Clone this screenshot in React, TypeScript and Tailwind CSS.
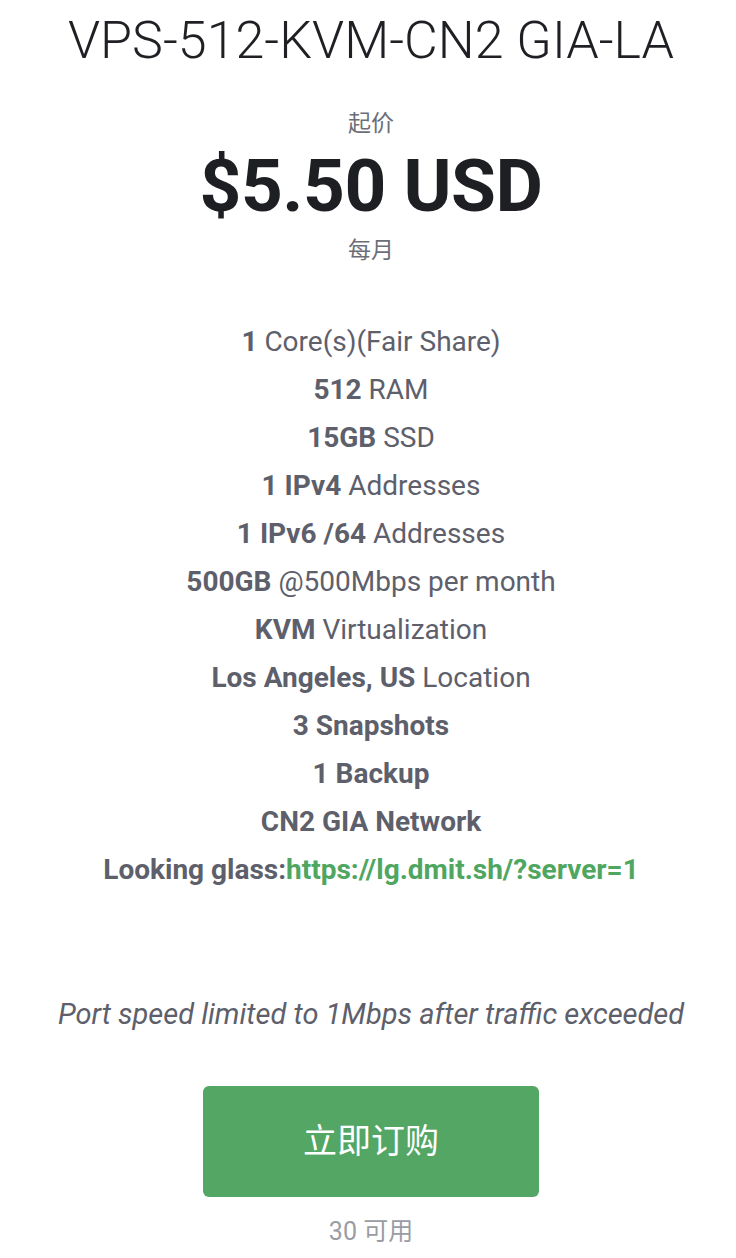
import React from "react";

const features: { b: string; t: string }[] = [
  { b: "1", t: " Core(s)(Fair Share)" },
  { b: "512", t: " RAM" },
  { b: "15GB", t: " SSD" },
  { b: "1 IPv4", t: " Addresses" },
  { b: "1 IPv6 /64", t: " Addresses" },
  { b: "500GB", t: " @500Mbps per month" },
  { b: "KVM", t: " Virtualization" },
  { b: "Los Angeles, US", t: " Location" },
  { b: "3 Snapshots", t: "" },
  { b: "1 Backup", t: "" },
  { b: "CN2 GIA Network", t: "" },
];

export default function App() {
  return (
    <div
      className="w-full bg-white flex flex-col items-center text-center pl-[6px]"
      style={{ fontFamily: 'Roboto, "Noto Sans CJK SC", sans-serif' }}
    >
      <h1 className="mt-[11px] text-[52px] leading-[60px] font-light text-[#1f2024] whitespace-nowrap">
        VPS-512-KVM-CN2 GIA-LA
      </h1>
      <div className="mt-[41px] text-[23px] leading-[24px] text-[#6b6e78]">起价</div>
      <div className="mt-[10px] text-[73px] leading-[80px] font-bold text-[#1e1f23] tracking-[-0.5px]">
        $5.50 USD
      </div>
      <div className="mt-[13px] text-[23px] leading-[24px] text-[#6b6e78]">每月</div>

      <ul className="mt-[55px] flex flex-col text-[28px] leading-[48px] text-[#5d606b]">
        {features.map((f) => (
          <li key={f.b + f.t}>
            <span className="font-bold">{f.b}</span>
            {f.t}
          </li>
        ))}
        <li>
          <span className="font-bold">Looking glass:</span>
          <a href="#" className="font-bold text-[#4fa660]">
            https://lg.dmit.sh/?server=1
          </a>
        </li>
      </ul>

      <p className="mt-[96px] text-[29px] leading-[48px] italic text-[#5d606b] whitespace-nowrap">
        Port speed limited to 1Mbps after traffic exceeded
      </p>

      <button className="mt-[48px] w-[336px] h-[111px] rounded-[6px] bg-[#53a664] text-white text-[34px]">
        立即订购
      </button>
      <div className="mt-[18px] text-[25px] leading-[34px] text-[#9a9ca4]">30 可用</div>
    </div>
  );
}
